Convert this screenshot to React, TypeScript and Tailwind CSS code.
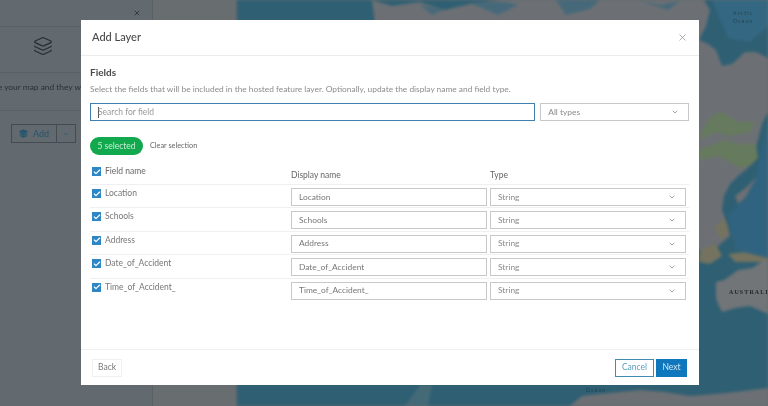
// Add Layer dialog over a dimmed map page

import React from 'react';
import { ChevronDown, Layers, Check, X } from 'lucide-react';

const fields = ['Location', 'Schools', 'Address', 'Date_of_Accident', 'Time_of_Accident_'];

const Checkbox: React.FC = () => (
  <span className="w-[9px] h-[9px] bg-[#2f86c5] flex items-center justify-center shrink-0">
    <Check className="w-[8px] h-[8px] text-white" strokeWidth={3.5} />
  </span>
);

const SelectBox: React.FC<{ label: string; className: string }> = ({ label, className }) => (
  <div className={`h-[18px] border border-[#c8c8c8] flex items-center justify-between pl-[7px] pr-[9px] text-[8.4px] text-[#8a8a8a] ${className}`}>
    <span>{label}</span>
    <ChevronDown className="w-[8px] h-[8px] text-[#777]" />
  </div>
);

const MapBackdrop: React.FC = () => (
  <svg viewBox="237 0 531 406" preserveAspectRatio="none" className="w-full h-full blur-[1.4px]">
    <rect x="237" y="0" width="531" height="406" fill="#2e5f73" />
    {/* Asia */}
    <path d="M372 0L392 6L420 2L445 10L470 4L500 0L704 0L710 10L706 26L699 40L708 44L716 50L722 66L732 64L745 52L756 52L768 58V112L762 124L758 140L755 152L748 168L738 176L730 184L724 196L722 210L728 226L730 236L718 246L699 250L420 250L380 60Z" fill="#6c7074" />
    <path d="M420 5L445 9L432 15ZM470 3L498 15L518 5L505 2ZM556 0L600 0L590 9L566 15ZM640 1L660 5L680 1L668 10Z" fill="#46697a" />
    {/* Japan and islands */}
    <path d="M735 196L748 186L757 176L752 192L738 204Z" fill="#6c7074" />
    <path d="M714 228L724 218L729 232L722 240ZM700 250L716 244L722 256L710 264L699 262ZM728 254L752 251L768 256V262L735 262Z" fill="#75735f" />
    {/* deeper sea to the east */}
    <path d="M756 178L768 120V258L735 250L728 214L745 198Z" fill="#30637f" />
    <path d="M712 0H768V26L750 42L728 38Z" fill="#346882" />
    {/* vegetation */}
    <path d="M705 125L714 114L722 112L738 122L755 122L750 132L730 136L716 132L699 140ZM699 150L725 140L740 144L756 144L758 158L750 166L740 168L718 156L699 160Z" fill="#667a5e" />
    {/* Australia */}
    <path d="M716 282L724 280L730 276L738 270L752 268L768 258V314L750 306L735 308L722 312L718 304L716 298Z" fill="#717578" />
    {/* Antarctica */}
    <path d="M570 406L582 396L600 394L640 390L665 392L690 396L715 394L735 392L768 388V406Z" fill="#6c7074" />
    <path d="M405 406L420 385L432 385L428 406Z" fill="#456a77" />
  </svg>
);

const Sidebar: React.FC = () => (
  <div className="w-[237px] h-full shrink-0 flex bg-[#686d70] text-[#3c4246]">
    <div className="w-[153px] h-full bg-[#626a6f] border-r border-[#5a6064] flex flex-col">
      <div className="h-[27px] shrink-0 border-b border-[#5a6064] flex items-center justify-end pr-[11px]">
        <X className="w-[8px] h-[8px] text-[#2b3034]" strokeWidth={2.5} />
      </div>
      <div className="h-[46px] shrink-0 border-b border-[#5a6064] flex items-center justify-center pr-[67px] pb-[8px]">
        <Layers className="w-[20px] h-[20px] text-[#272c30]" strokeWidth={1.4} />
      </div>
      <div className="h-[38px] shrink-0 border-b border-[#5a6064] pt-[8px]">
        <div className="w-[81px] flex justify-end whitespace-nowrap text-[8.4px] text-[#2b3034]">
          <span className="shrink-0">e your map and they w</span>
        </div>
      </div>
      <div className="pt-[13px] pl-[11px]">
        <div className="flex w-[65px] h-[19px] border border-[#454c51] text-[9px] text-[#27566f] font-medium">
          <div className="flex-1 flex items-center justify-center gap-[5px] border-r border-[#454c51]">
            <Layers className="w-[9px] h-[9px] text-[#27566f]" fill="#27566f" />
            Add
          </div>
          <div className="w-[18px] flex items-center justify-center">
            <ChevronDown className="w-[8px] h-[8px] text-[#27566f]" />
          </div>
        </div>
      </div>
    </div>
  </div>
);

const App: React.FC = () => (
  <div className="relative w-[768px] h-[406px] overflow-hidden flex bg-[#626a6f] font-['Lato',sans-serif] blur-[0.4px]">
    <Sidebar />
    <div className="flex-1 h-full">
      <MapBackdrop />
    </div>

    {/* Dialog */}
    <div className="absolute left-[81px] top-[20px] w-[618px] h-[365px] bg-white flex flex-col">
      <div className="h-[36px] shrink-0 border-b border-[#ececec] flex items-center justify-between pl-[11px] pr-[11px]">
        <span className="text-[11px] font-medium text-[#4a4a4a]">Add Layer</span>
        <X className="w-[11px] h-[11px] text-[#8c8c8c]" strokeWidth={1.5} />
      </div>

      <div className="flex-1 pt-[10px] pl-[9px] pr-[10px]">
        <div className="text-[10px] leading-[13px] font-bold text-[#4a4a4a]">Fields</div>
        <p className="mt-[4px] text-[8.35px] leading-[12px] text-[#8c8c8c]">
          Select the fields that will be included in the hosted feature layer. Optionally, update the display name and field type.
        </p>

        <div className="mt-[8px] flex gap-[5px]">
          <div className="w-[446px] h-[18px] border border-[#3f7fb0] flex items-center pl-[7px] text-[8.5px] text-[#9a9a9a]">
            <span className="w-px h-[11px] bg-[#555] -mr-px" />
            Search for field
          </div>
          <SelectBox label="All types" className="w-[149px]" />
        </div>

        <div className="mt-[16px] flex items-center gap-[7px]">
          <span className="w-[53px] h-[18px] rounded-full bg-[#12a84e] flex items-center justify-center text-[8.5px] text-[#c8efd5]">
            5 selected
          </span>
          <span className="text-[7.3px] text-[#666]">Clear selection</span>
        </div>

        <div className="mt-[8px] pl-[2px] grid grid-cols-[199px_199px_196px] h-[22px] border-b border-[#f0f0f0] text-[8.5px] text-[#666]">
          <div className="flex items-start gap-[4px] pt-[2px]">
            <span className="mt-[2px]"><Checkbox /></span>
            Field name
          </div>
          <div className="pt-[6px]">Display name</div>
          <div className="pt-[6px]">Type</div>
        </div>

        {fields.map((name) => (
          <div key={name} className="pl-[2px] grid grid-cols-[199px_199px_196px] h-[23.4px] border-b border-[#f0f0f0] last:border-b-0 text-[8.5px] text-[#777]">
            <div className="flex items-start gap-[4px] pt-[2px]">
              <span className="mt-[2px]"><Checkbox /></span>
              {name}
            </div>
            <div className="pt-[3px]">
              <div className="w-[196px] h-[18px] border border-[#c8c8c8] flex items-center pl-[7px] text-[8.4px] text-[#777]">{name}</div>
            </div>
            <div className="pt-[3px]">
              <SelectBox label="String" className="w-[196px]" />
            </div>
          </div>
        ))}
      </div>

      <div className="h-[36px] shrink-0 border-t border-[#efefef] flex items-center justify-between pl-[11px] pr-[12px] text-[8.5px]">
        <span className="w-[30px] h-[18px] border border-[#f0f0f0] flex items-center justify-center text-[#777]">Back</span>
        <div className="flex gap-[2px]">
          <span className="w-[39px] h-[18px] border border-[#3f8cb0] flex items-center justify-center text-[#5a9dc0]">Cancel</span>
          <span className="w-[31px] h-[18px] bg-[#0f78bd] flex items-center justify-center text-[#cfe6f5]">Next</span>
        </div>
      </div>
    </div>

    {/* Map labels */}
    <span className="absolute left-[733px] top-[9px] text-[5px] leading-[8px] tracking-[1.2px] text-center text-[#23404f]">Arctic<br />Ocean</span>
    <span className="absolute left-[729px] top-[288px] text-[6px] font-bold tracking-[1.1px] text-[#24282c] font-['Liberation_Serif',serif]">AUSTRALI</span>
    <span className="absolute left-[586px] top-[387px] text-[5px] tracking-[1.2px] text-[#23404f]">Ocean</span>
  </div>
);

export default App;
